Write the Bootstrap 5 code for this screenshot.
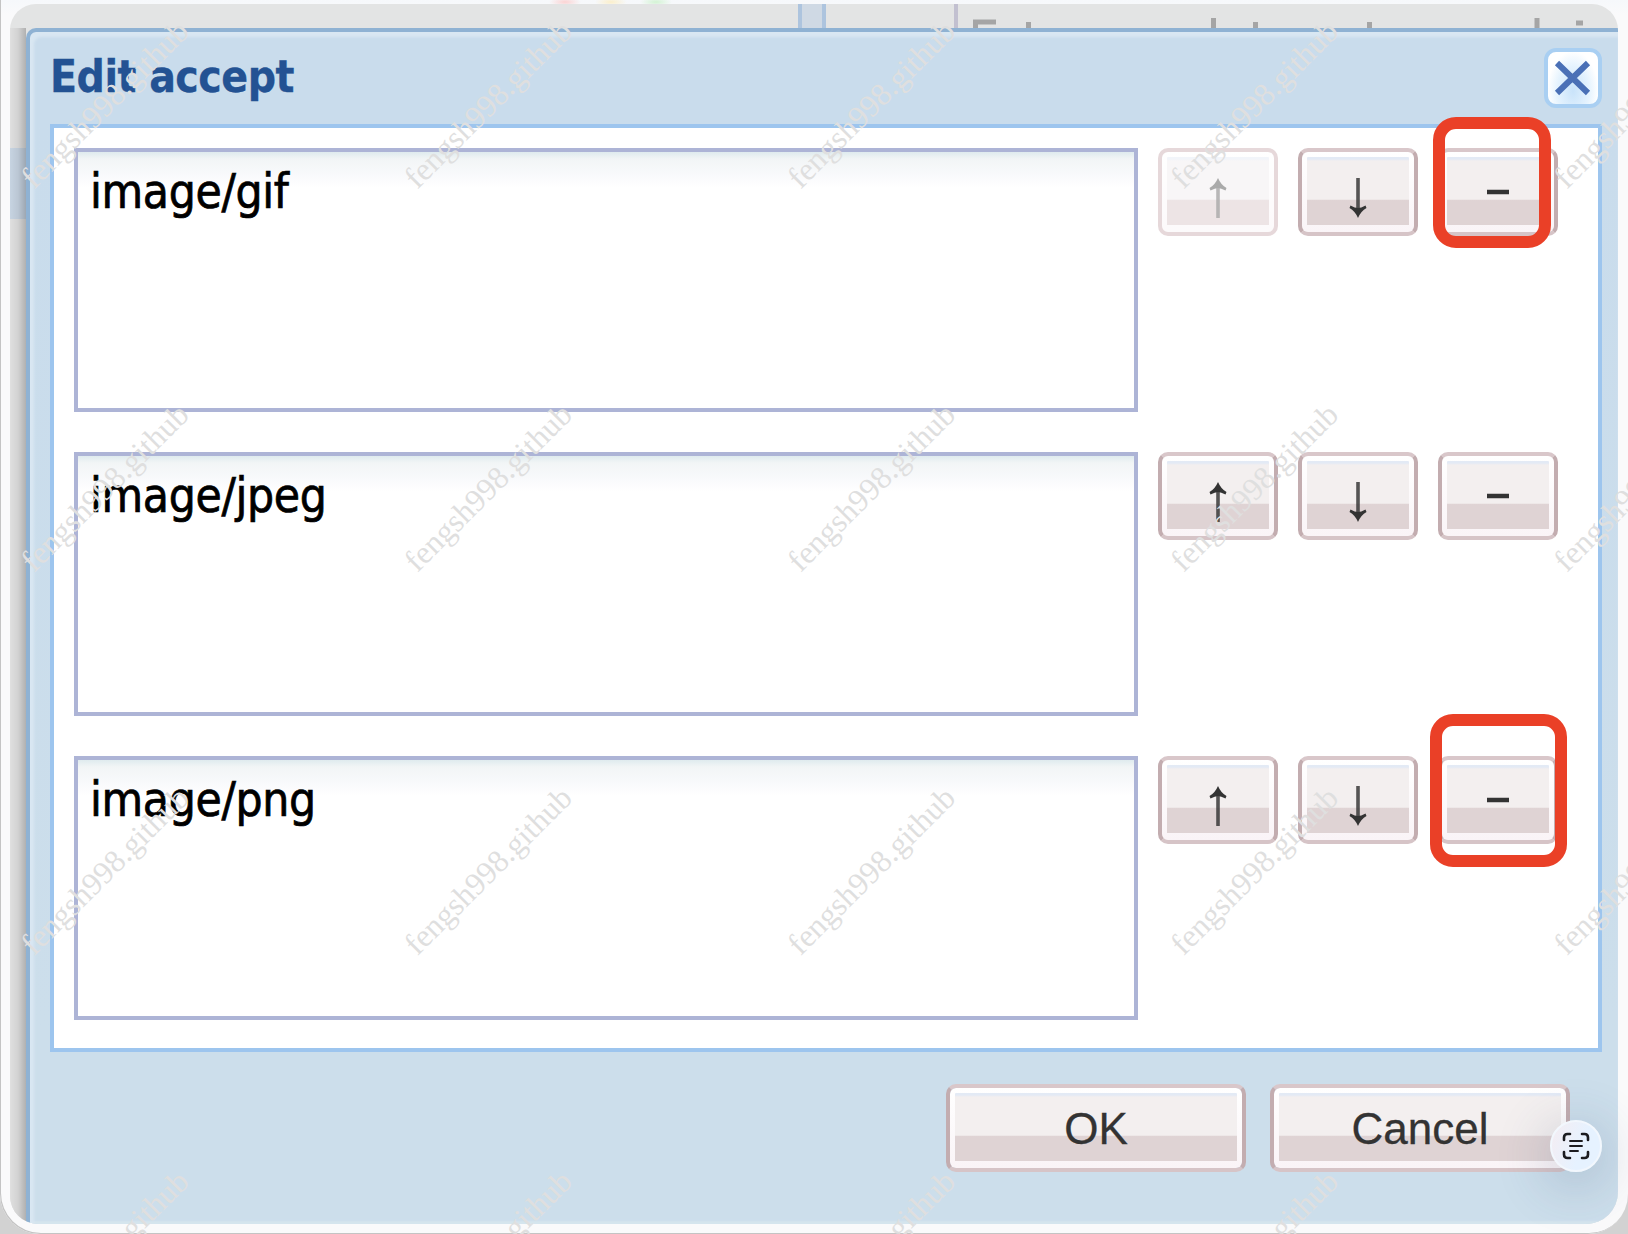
<!DOCTYPE html>
<html lang="en">
<head>
<meta charset="utf-8">
<meta name="viewport" content="width=device-width, initial-scale=1">
<title>Edit accept</title>
<link href="https://cdn.jsdelivr.net/npm/bootstrap@5.3.0/dist/css/bootstrap.min.css" rel="stylesheet">
<style>
  body { width: 1628px; height: 1234px; background: #d2d2d2; }
  .viewer { width: 1628px; height: 1234px; padding: 4px 10px 10px; border-radius: 0 0 40px 40px; box-shadow: inset 1px -1px 0 #c4c4c4;
    background: radial-gradient(ellipse 16px 5px at 565px 2px, #fbd3d3, transparent), radial-gradient(ellipse 16px 5px at 611px 2px, #fbefcb, transparent), radial-gradient(ellipse 16px 5px at 656px 2px, #d3f3d3, transparent), linear-gradient(#f6f8fb, #fafafb 15px); }
  .capture { height: 1220px; border-radius: 26px 26px 32px 28px; background: #e3e4e4; }
  .page-behind { height: 24px; }
  .page-behind svg { display: block; }
  .page-side { width: 16px; background: linear-gradient(90deg, rgba(0,0,0,.01), rgba(0,0,0,.07) 50%, rgba(0,0,0,.22)), linear-gradient(#e2e2e2 120px, #c9d6e4 120px 191px, #e2e2e2 191px); }
  .dlg { border: 4px solid #8fb2d3; border-width: 4px 0 0 4px; border-radius: 10px 0 0 0; background: linear-gradient(#c9dcec 90px, #ccdeeb 1000px); box-shadow: inset 5px 6px 3px -1px #d9e7f2, inset 0 -3px 2px #d5e5ee; padding: 0 16px 0 20px; }
  .dlg-head { height: 92px; padding-top: 16px; }
  .dlg-title { font: bold 44px/58px "DejaVu Sans Condensed", "DejaVu Sans", sans-serif; font-stretch: condensed; color: #235293; letter-spacing: -.5px; -webkit-text-stroke: .3px #235293; }
  .btn-x { width: 58px; height: 60px; padding: 4px; border: 4px solid #a9cff2; border-radius: 12px; background: radial-gradient(ellipse at 50% 75%, #c9e3fa, #e5f3fe 45%, #fff 72%); }
  .btn-x svg { display: block; }
  .dlg-body { height: 928px; border: 4px solid #9dc5ee; padding: 20px; background: #fff; }
  .entry { gap: 20px; }
  .entry-text { flex: 0 0 1064px; width: 1064px; height: 264px; border: 4px solid #adb4d6; border-radius: 0; resize: none; padding: 11px 12px; font: 47.5px/58px "DejaVu Sans Condensed", "DejaVu Sans", sans-serif; font-stretch: condensed; color: #000; letter-spacing: -.35px; -webkit-text-stroke: .7px #000; background: linear-gradient(#dfebee, #f2f5f6 7px, #f9fafc 24px, #fff 36px); overflow: hidden; }
  .btn-pink { border: 4px solid; border-color: #d9c7ca #c3adb0 #d6c4c7; border-radius: 10px; padding: 5px 5px 7px; height: 88px; color: #333;
    background: linear-gradient(#e3eaf5 0 2px, #f3efef 4px 62%, #dfd3d4 64%) content-box, linear-gradient(#fff, #faf4f7) padding-box; font: 44px/72px "Liberation Sans", Arial, sans-serif; -webkit-text-stroke: .3px #333; }
  .btn-sq { width: 120px; }
  .btn-sq svg { display: block; width: 102px; height: 71px; }
  .btn-sq:disabled { opacity: .45; color: #444; border-color: #c9abaf; background: linear-gradient(#e3eaf5 0 2px, #f1ecee 4px 62%, #d8c5c7 64%) content-box, linear-gradient(#fff, #faf4f7) padding-box; }
  .btn-wide { width: 300px; }
  .dlg-foot { height: 172px; padding: 32px 32px 0 0; gap: 24px; }
  .ring { position: absolute; border: 12px solid #ea4027; border-radius: 23px; }
  .ring-a { left: 1433px; top: 117px; width: 118px; height: 131px; }
  .ring-b { left: 1430px; top: 714px; width: 137px; height: 153px; }
  .live-text { position: absolute; left: 1550px; top: 1120px; width: 52px; height: 52px; border-radius: 50%; background: linear-gradient(110deg, #f5edf2, #e6f2ff 60%); border: 2px solid #f2f7fd; box-shadow: 0 10px 50px 8px rgba(50,70,110,.18); }
  .stamps { position: absolute; left: 0; top: 0; pointer-events: none; }
  .stamps text { font: 31.8px "Liberation Serif", "Times New Roman", serif; fill: #dfdfdf; }
</style>
</head>
<body class="m-0 overflow-hidden">
<div class="viewer position-relative overflow-hidden">
  <main class="capture overflow-hidden d-flex flex-column">
    <div class="page-behind">
      <svg width="1608" height="24" viewBox="10 4 1608 24">
        <rect x="799" y="4" width="25" height="24" fill="#cfd9e4"/>
        <path d="M800 4V28M824 4V28" stroke="#adc4de" stroke-width="4"/>
        <path d="M956 4V28" stroke="#c2c0d0" stroke-width="4"/>
        <path d="M975.500 28V22H996M1028.500 28V22M1213.500 28V18M1255.500 28V22M1369.500 28V22M1537 28V18M1576 23H1583" stroke="#a5a5a5" stroke-width="5" fill="none"/>
      </svg>
    </div>
    <div class="d-flex flex-grow-1">
      <div class="page-side flex-shrink-0"></div>
      <section class="dlg flex-grow-1" role="dialog" aria-labelledby="dlgTitle">
        <header class="dlg-head d-flex justify-content-between align-items-start">
          <h1 class="dlg-title m-0" id="dlgTitle">Edit accept</h1>
          <button type="button" class="btn btn-x" aria-label="Close">
            <svg width="42" height="44" viewBox="0 0 42 44"><path d="M5 7L36 37M36 7L5 37" stroke="#4a70b6" stroke-width="6"/></svg>
          </button>
        </header>
        <div class="dlg-body d-flex flex-column">
          <div class="entry d-flex align-items-start mb-auto">
            <textarea class="form-control entry-text" spellcheck="false">image/gif</textarea>
            <button type="button" class="btn btn-pink btn-sq" disabled aria-label="Up"><svg viewBox="0 0 102 71"><use href="#up"/></svg></button>
            <button type="button" class="btn btn-pink btn-sq" aria-label="Down"><svg viewBox="0 0 102 71"><use href="#down"/></svg></button>
            <button type="button" class="btn btn-pink btn-sq" aria-label="Remove"><svg viewBox="0 0 102 71"><use href="#minus"/></svg></button>
          </div>
          <div class="entry d-flex align-items-start mb-auto">
            <textarea class="form-control entry-text" spellcheck="false">image/jpeg</textarea>
            <button type="button" class="btn btn-pink btn-sq" aria-label="Up"><svg viewBox="0 0 102 71"><use href="#up"/></svg></button>
            <button type="button" class="btn btn-pink btn-sq" aria-label="Down"><svg viewBox="0 0 102 71"><use href="#down"/></svg></button>
            <button type="button" class="btn btn-pink btn-sq" aria-label="Remove"><svg viewBox="0 0 102 71"><use href="#minus"/></svg></button>
          </div>
          <div class="entry d-flex align-items-start mb-2">
            <textarea class="form-control entry-text" spellcheck="false">image/png</textarea>
            <button type="button" class="btn btn-pink btn-sq" aria-label="Up"><svg viewBox="0 0 102 71"><use href="#up"/></svg></button>
            <button type="button" class="btn btn-pink btn-sq" aria-label="Down"><svg viewBox="0 0 102 71"><use href="#down"/></svg></button>
            <button type="button" class="btn btn-pink btn-sq" aria-label="Remove"><svg viewBox="0 0 102 71"><use href="#minus"/></svg></button>
          </div>
        </div>
        <footer class="dlg-foot d-flex justify-content-end align-items-start">
          <button type="button" class="btn btn-pink btn-wide">OK</button>
          <button type="button" class="btn btn-pink btn-wide">Cancel</button>
        </footer>
      </section>
    </div>
  </main>
  <div class="ring ring-a"></div>
  <div class="ring ring-b"></div>
  <div class="live-text d-flex align-items-center justify-content-center">
    <svg width="28" height="28" viewBox="0 0 28 28" fill="none" stroke="#1c1c20" stroke-linecap="round">
      <path stroke-width="2.600" d="M2 8V5.500Q2 2 5.500 2H8M20 2H22.500Q26 2 26 5.500V8M26 20V22.500Q26 26 22.500 26H20M8 26H5.500Q2 26 2 22.500V20"/>
      <path stroke-width="1.900" d="M8 9H20M8 14H20M8 19H16"/>
    </svg>
  </div>
  <svg class="stamps" id="stamps" width="1628" height="1234" aria-hidden="true"></svg>
</div>
<svg width="0" height="0" class="position-absolute">
  <defs>
    <g id="up"><path d="M51 26V61" stroke="currentColor" stroke-width="3.600" opacity=".82"/><path d="M51 21Q54 28 59.500 31L58.500 33.500Q54 31 51 31Q48 31 43.500 33.500L42.500 31Q48 28 51 21Z" fill="currentColor"/></g>
    <g id="down"><path d="M51 21V56" stroke="currentColor" stroke-width="3.600" opacity=".82"/><path d="M51 61Q54 54 59.500 51L58.500 48.500Q54 51 51 51Q48 51 43.500 48.500L42.500 51Q48 54 51 61Z" fill="currentColor"/></g>
    <g id="minus"><path d="M40 35H62" stroke="currentColor" stroke-width="4.500"/></g>
  </defs>
</svg>
<script src="https://cdn.jsdelivr.net/npm/bootstrap@5.3.0/dist/js/bootstrap.bundle.min.js"></script>
<script>
  // Tile the diagonal stamp across the whole viewer
  const stamps = document.getElementById('stamps');
  for (let row = 0; row < 4; row++) {
    for (let col = 0; col < 5; col++) {
      const t = document.createElementNS('http://www.w3.org/2000/svg', 'text');
      t.setAttribute('transform', `translate(${34 + col * 383.2} ${190 + row * 383.3}) rotate(-45)`);
      t.textContent = 'fengsh998.github';
      stamps.appendChild(t);
    }
  }
</script>
</body>
</html>
